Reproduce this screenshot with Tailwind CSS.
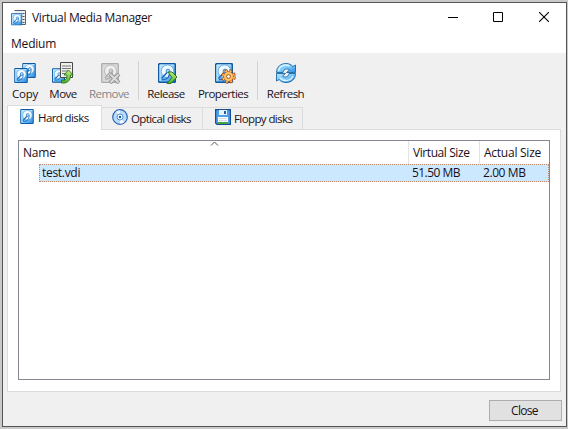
<!DOCTYPE html>
<html lang="en">
<head>
<meta charset="utf-8">
<title>Virtual Media Manager</title>
<script src="https://cdn.jsdelivr.net/npm/@tailwindcss/browser@4"></script>
</head>
<body class="h-[429px] w-[568px] overflow-hidden bg-[#c9c9c9] pt-[2px] pl-[2px] font-['Open_Sans','Noto_Sans',sans-serif] text-[12px] leading-4 whitespace-nowrap text-[#1a1018]">
<svg width="0" height="0" class="absolute">
  <defs>
    <linearGradient id="blue" x1="0" y1="0" x2="1" y2="1"><stop stop-color="#b4e4ff"/><stop offset=".5" stop-color="#7cc8fa"/><stop offset="1" stop-color="#2c8ae2"/></linearGradient>
    <linearGradient id="green" x1="0" y1="0" x2="0" y2="1"><stop stop-color="#c3f07a"/><stop offset="1" stop-color="#4bac2c"/></linearGradient>
    <symbol id="disk" viewBox="0 0 18 20">
      <rect x=".7" y=".7" width="16.6" height="18.6" rx=".6" fill="url(#blue)" stroke="#11599f" stroke-width="1.4"/>
      <path d="M2 18V2h14" fill="none" stroke="#d4eeff" stroke-width=".9"/>
      <circle cx="9.5" cy="8.200" r="6.300" fill="#f1faff" stroke="#4a98dc" stroke-width=".7"/>
      <path d="M4 16.500c5.500.5 8.500-3.500 7.500-8.500" fill="none" stroke="#1c6cbd" stroke-width="1.300"/>
      <path d="M3.500 15.500L9.500 9" fill="none" stroke="#1c6cbd" stroke-width="1.500"/>
      <circle cx="10" cy="8" r="1.900" fill="#a7d8fa" stroke="#2878c0" stroke-width=".8"/>
    </symbol>
    <symbol id="graydisk" viewBox="0 0 18 20">
      <rect x=".7" y=".7" width="16.6" height="18.6" rx=".6" fill="#dadada" stroke="#acacac" stroke-width="1.2"/>
      <circle cx="9.5" cy="8" r="6" fill="#efefef" stroke="#b9b9b9"/>
      <circle cx="10" cy="8" r="2" fill="#d2d2d2" stroke="#b0b0b0"/>
      <path d="M4 16c5 .5 8-3 7-8M4 15l5-6" fill="none" stroke="#aaa" stroke-width="1.200"/>
    </symbol>
  </defs>
</svg>
<div class="flex h-[425px] w-[565px] flex-col border border-[#555] bg-[#f0f0f0]">
  <header class="flex h-7 shrink-0 items-center bg-white pl-2">
    <svg class="mt-px shrink-0" width="16" height="16" viewBox="0 0 16 16">
      <path d="M3.500.5h11v14h-7" fill="#eee" stroke="#55616e"/><path d="M11.500 3.500h2M11.500 6.500h2M11.500 9.500h2M11.500 12.500h2" stroke="#555"/>
      <use href="#disk" x="0" y="3" width="11.500" height="12.500"/>
    </svg>
    <h1 class="ml-[5px] w-[400px] pt-px tracking-[-0.33px]">Virtual Media Manager</h1>
    <div class="ml-4 flex items-center">
      <svg width="10" height="10"><path d="M0 5.500h10" stroke="#000"/></svg>
      <svg class="ml-[35px]" width="10" height="10"><path d="M.5.5h9v9h-9z" fill="none" stroke="#000"/></svg>
      <svg class="ml-[36px]" width="10" height="10"><path d="M0 0l10 10M10 0L0 10" stroke="#000" stroke-width="1.100"/></svg>
    </div>
  </header>
  <nav class="h-[22px] shrink-0 bg-white pt-[5px] pl-2"><span class="tracking-[-0.2px]">Medium</span></nav>
  <div class="flex h-[52px] shrink-0 pt-[9px] text-[11.5px] tracking-[-0.55px]">
    <div class="ml-[3px] flex w-[38px] flex-col items-center">
      <svg class="shrink-0" width="22" height="22"><use href="#disk" x="8" y="1" width="14" height="15"/><use href="#disk" x="0" y="6" width="14" height="15"/></svg>
      <span class="mt-[2px] tracking-[-0.25px]">Copy</span>
    </div>
    <div class="flex w-[38px] flex-col items-center">
      <svg class="shrink-0" width="22" height="22"><use href="#disk" x="0" y="6" width="13" height="15"/><path d="M8.500.5h12v15h-12z" fill="#f0f0ec" stroke="#494949"/><path d="M10 4h9M10 6.500h9M10 9h7M10 11.500h5" stroke="#777"/><path d="M9.500 18c4 1 5.500-1 5.500-5h-3l4.500-5 4.700 5H18.500c0 6.500-4 8.500-9 8z" fill="url(#green)" stroke="#26771a" stroke-width=".9"/></svg>
      <span class="mt-[2px] tracking-[-0.55px]">Move</span>
    </div>
    <div class="flex w-[54px] flex-col items-center text-[#858585]">
      <svg class="ml-[2px] shrink-0" width="22" height="22"><use href="#graydisk" x="2" y="1" width="18" height="20"/><path d="M11 12l9 9M20 12l-9 9" stroke="#969696" stroke-width="4"/><path d="M11.500 12.500l8 8M19.500 12.500l-8 8" stroke="#dcdcdc" stroke-width="2"/></svg>
      <span class="mt-[2px]">Remove</span>
    </div>
    <div class="-mt-px ml-[2px] h-[39px] w-px bg-[#d4d4d4]"></div>
    <div class="flex w-[54px] flex-col items-center">
      <svg class="ml-[2px] shrink-0" width="22" height="22"><use href="#disk" x="2" y="1" width="18" height="20"/><path d="M12 10h4l5 5-6 6.500h-4l5-6z" fill="url(#green)" stroke="#277b1e"/></svg>
      <span class="mt-[2px]">Release</span>
    </div>
    <div class="flex w-[60px] flex-col items-center">
      <svg class="ml-[4px] shrink-0" width="22" height="22"><use href="#disk" x="1" y="1" width="18" height="20"/><circle cx="14.500" cy="14.500" r="5.700" fill="none" stroke="#a84b12" stroke-width="3.200" stroke-dasharray="2.800 1.680"/><circle cx="14.500" cy="14.500" r="5" fill="#ffc46b" stroke="#a84b12" stroke-width=".9"/><circle cx="14.500" cy="14.500" r="5.600" fill="none" stroke="#ffc46b" stroke-width="1.600" stroke-dasharray="1.800 2.600" stroke-dashoffset="-.5"/><circle cx="14.500" cy="14.500" r="1.900" fill="#fff" stroke="#a84b12"/></svg>
      <span class="mt-[2px]">Properties</span>
    </div>
    <div class="-mt-px ml-[4px] h-[39px] w-px bg-[#d4d4d4]"></div>
    <div class="flex w-[55px] flex-col items-center">
      <svg class="shrink-0" width="22" height="22" viewBox="0 0 22 22"><g fill="url(#blue)" stroke="#1b65a3" stroke-width=".9"><path d="M1.500 10.500C1.500 4.500 6 1.500 11 1.500c3 0 5 1 7 3L20.500 3v7.500h-9l3-2.500c-2.500-2-6-1-6.500 2.500z"/><path d="M20.500 11.500c0 6-4.500 9-9.500 9-3 0-5-1-7-3L1.500 19v-7.500h9l-3 2.500c2.500 2 6 1 6.500-2.500z"/></g><path d="M3.500 9C4 4.500 9 1.500 14.500 4M5 16c4 4 11 3 13-2" fill="none" stroke="#d8f3ff" stroke-width="1.400"/></svg>
      <span class="mt-[2px]">Refresh</span>
    </div>
  </div>
  <div class="relative z-10 flex h-[24px] shrink-0 items-end pl-[4px] text-[11.5px] tracking-[-0.6px]">
    <div class="-mb-px flex h-[25px] w-[95px] border border-b-0 border-[#dcdcdc] bg-white pt-[3px] pl-[12px]">
      <svg class="shrink-0" width="14" height="15"><use href="#disk" width="14" height="15"/></svg><span class="ml-1 pt-px">Hard disks</span>
    </div>
    <div class="flex h-[22px] w-[101px] border-t border-r border-[#dcdcdc] pt-px pl-[10px]">
      <svg class="shrink-0" width="16" height="16"><circle cx="8" cy="8" r="7.300" fill="#b9dcfa" stroke="#2b62b5" stroke-width="1.200"/><path d="M8 8L4 2.500A7 7 0 0 1 8 1.400zM8 8l4 5.500A7 7 0 0 1 8 14.600z" fill="#f5fcff"/><circle cx="8" cy="8" r="3" fill="#fff" stroke="#4c90d7"/><circle cx="8" cy="8" r="1.200" fill="#174f9b"/></svg><span class="ml-[3px] pt-[2px]">Optical disks</span>
    </div>
    <div class="flex h-[22px] w-[100px] border-t border-r border-[#dcdcdc] pt-px pl-[12px]">
      <svg class="shrink-0" width="16" height="16"><path d="M.6.600h14.800v14.800H2L.6 14z" fill="#4c9fe8" stroke="#164e94" stroke-width="1.200"/><path d="M4 1h8v5H4z" fill="#e4f3fc"/><path d="M9 2h2v3H9z" fill="#225d9d"/><path d="M3 8h10v5H3z" fill="#fff"/><path d="M4 9.500h8M4 11.500h8" stroke="#cddde8"/><path d="M3 13h10v2H3z" fill="#42a544"/></svg><span class="ml-[3px] pt-[2px]">Floppy disks</span>
    </div>
  </div>
  <main class="ml-[4px] h-[263px] w-[554px] shrink-0 border border-[#dcdcdc] bg-white pt-[10px] pl-[10px]">
    <div class="h-[240px] w-[532px] border border-[#828790] tracking-[-0.42px]">
      <div class="relative flex h-[23px] pt-[4px]">
        <svg class="absolute top-0 left-[191px]" width="9" height="5"><path d="M1 4.500l3.500-3.500L8 4.500" fill="none" stroke="#555"/></svg>
        <span class="w-[389px] pl-1 tracking-[-0.2px]">Name</span>
        <span class="-mt-1 h-[23px] w-[71px] border-l border-[#e3e3e3] pt-1 pl-1">Virtual Size</span>
        <span class="-mt-1 h-[23px] w-[70px] border-l border-[#e3e3e3] pt-1 pl-1 tracking-[-0.25px]">Actual Size</span>
      </div>
      <div class="ml-5 flex h-[18px] w-[510px] border border-dotted border-[#bd8868] bg-[#cce8ff]">
        <span class="w-[370px] pl-[2px] tracking-[-0.3px]">test.vdi</span><span class="w-[71px] pl-[2px] tracking-[-0.55px]">51.50 MB</span><span class="pl-[2px]">2.00 MB</span>
      </div>
    </div>
  </main>
  <footer class="pt-[8px] pl-[486px]"><button class="flex h-[21px] w-[73px] items-center justify-center border border-[#adadad] bg-[#e1e1e1] pr-[2px] tracking-[-0.7px]">Close</button></footer>
</div>
</body>
</html>
